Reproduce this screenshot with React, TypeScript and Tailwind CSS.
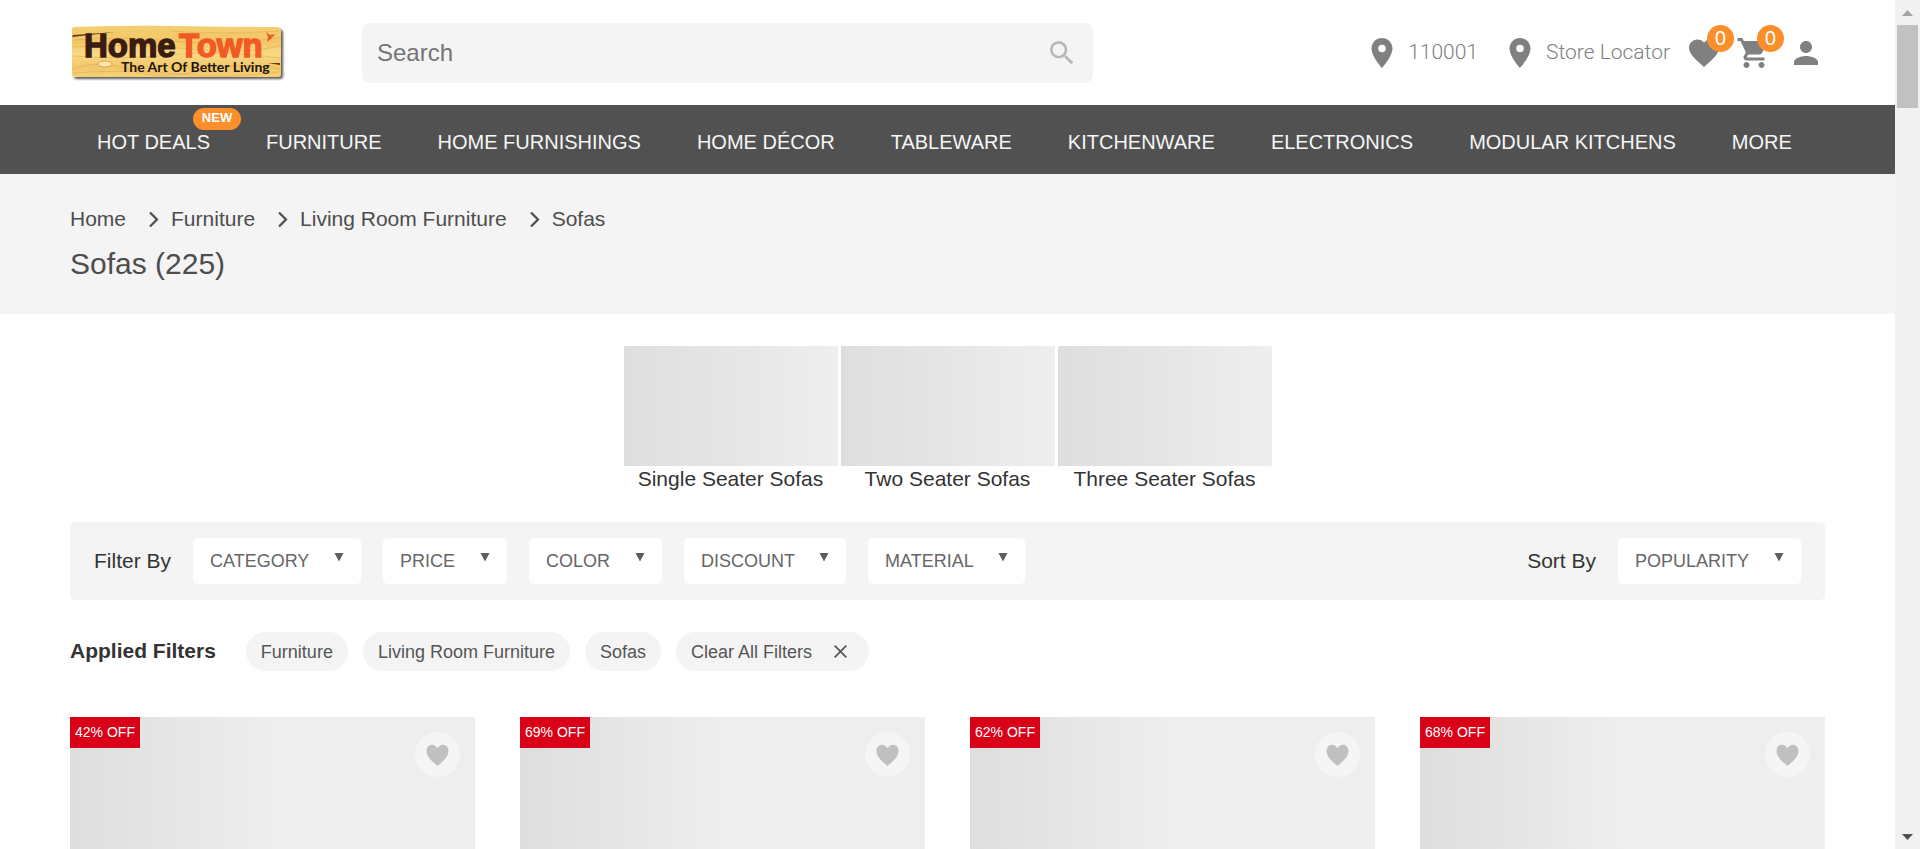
import React from "react";
import {
  MdFavorite,
  MdLocationOn,
  MdPerson,
  MdSearch,
  MdShoppingCart,
} from "react-icons/md";

const navItems = [
  "FURNITURE",
  "HOME FURNISHINGS",
  "HOME DÉCOR",
  "TABLEWARE",
  "KITCHENWARE",
  "ELECTRONICS",
  "MODULAR KITCHENS",
  "MORE",
];
const crumbs = ["Home", "Furniture", "Living Room Furniture", "Sofas"];
const categories = ["Single Seater Sofas", "Two Seater Sofas", "Three Seater Sofas"];
const filters = ["CATEGORY", "PRICE", "COLOR", "DISCOUNT", "MATERIAL"];
const applied = ["Furniture", "Living Room Furniture", "Sofas"];
const discounts = ["42% OFF", "69% OFF", "62% OFF", "68% OFF"];

function Logo() {
  return (
    <svg width="216" height="60" viewBox="0 0 216 60" role="img" aria-label="HomeTown, The Art Of Better Living">
      <defs>
        <linearGradient id="wood" x1="0" y1="0" x2="0" y2="1">
          <stop offset="0" stopColor="#f3cf73" />
          <stop offset="0.3" stopColor="#f3c665" />
          <stop offset="0.55" stopColor="#f9d985" />
          <stop offset="0.8" stopColor="#f2c76b" />
          <stop offset="1" stopColor="#f5d077" />
        </linearGradient>
        <filter id="shade" x="-5%" y="-10%" width="112%" height="130%">
          <feDropShadow dx="2" dy="2" stdDeviation="1" floodColor="#222" floodOpacity="0.75" />
        </filter>
      </defs>
      <path d="M4 4 Q60 2 110 3 T208 4 Q211 5 211 8 V51 Q211 54 208 54 H5 Q2 54 2 51 V7 Q2 4 4 4Z" fill="url(#wood)" filter="url(#shade)" />
      <g fill="none" stroke="#d99c3c" strokeWidth="0.8" opacity="0.5">
        <path d="M4 17 Q50 13 100 18 T209 15" />
        <path d="M3 24 Q70 20 120 26 T210 23" />
        <path d="M3 33 Q50 37 100 32 T210 35" />
        <path d="M3 46 Q30 36 60 47 T130 48 T210 46" />
        <path d="M3 50 Q60 46 110 51 T209 49" />
        <path d="M100 8 Q150 12 209 8" />
      </g>
      <ellipse cx="35" cy="41" rx="7" ry="3" fill="#fbe7ae" stroke="#cf8f3c" strokeWidth="0.7" />
      <path d="M3 12 L46 9 L20 12 L2 14Z M198 40 L210 40 L210 42Z" fill="#5b3a16" />
      <g fontFamily="'Liberation Sans', sans-serif" fontWeight="700" fontSize="33" strokeWidth="1.4">
        <text x="14" y="34" fill="#3a1c12" stroke="#3a1c12">Home</text>
        <text x="109" y="34" fill="#f15a24" stroke="#f15a24">Town</text>
      </g>
      <path d="M196 9 L200 12 L205 11 L202 15 L197 19 L198 14Z" fill="#f15a24" />
      <text x="51" y="49" fontFamily="Lato, sans-serif" fontWeight="700" fontSize="14" fill="#20140c">The Art Of Better Living</text>
    </svg>
  );
}

function CountBadge({ count }: { count: number }) {
  return (
    <span className="absolute -top-2.5 left-[21px] flex size-[27px] items-center justify-center rounded-full bg-[#fa8f2c] font-['Noto_Sans',sans-serif] text-xl leading-none text-white">
      {count}
    </span>
  );
}

function Header() {
  return (
    <header className="flex h-[105px] items-center pl-[70px] pr-[71px] text-[#808080]">
      <a href="#home" className="block">
        <Logo />
      </a>
      <form className="ml-[76px] flex h-[60px] w-[731px] items-center rounded-lg bg-[#f4f4f4] px-[15px]">
        <input
          type="text"
          aria-label="Search"
          placeholder="Search"
          className="min-w-0 flex-1 bg-transparent text-2xl outline-none placeholder:text-[#757575]"
        />
        <button type="button" aria-label="Submit search">
          <MdSearch className="size-8 text-[#b8b8b8]" />
        </button>
      </form>
      <div className="ml-auto flex items-center">
        <div className="flex items-center gap-6 font-['Roboto',sans-serif] text-[21px] font-light">
          <button type="button" className="flex items-center gap-2">
            <MdLocationOn className="size-9" />
            110001
          </button>
          <a href="#stores" className="flex items-center gap-2">
            <MdLocationOn className="size-9" />
            Store Locator
          </a>
        </div>
        <a href="#wishlist" aria-label="Wishlist" className="relative ml-4">
          <MdFavorite className="size-9" />
          <CountBadge count={0} />
        </a>
        <a href="#cart" aria-label="Cart" className="relative ml-3.5">
          <MdShoppingCart className="size-9" />
          <CountBadge count={0} />
        </a>
        <a href="#account" aria-label="Account" className="ml-4">
          <MdPerson className="size-9" />
        </a>
      </div>
    </header>
  );
}

function MainNav() {
  return (
    <nav className="flex h-[69px] items-center gap-14 bg-[#515151] px-[97px] pt-1 text-xl text-[#f6f6f6]">
      <a href="#deals" className="relative whitespace-nowrap">
        HOT DEALS
        <span className="absolute -top-5 left-24 flex h-[22px] w-12 items-center justify-center rounded-full bg-[#fa8f2c] text-[13px] font-bold text-white">
          NEW
        </span>
      </a>
      {navItems.map((item) => (
        <a key={item} href="#nav" className="whitespace-nowrap">
          {item}
        </a>
      ))}
    </nav>
  );
}

function Chevron() {
  return (
    <svg width="10" height="17" viewBox="0 0 10 17" fill="none" stroke="currentColor" strokeWidth="2.2" aria-hidden="true">
      <path d="M1 1.5 L8 8.5 L1 15.5" />
    </svg>
  );
}

function PageTitle() {
  return (
    <div className="h-[140px] bg-[#f4f4f4] px-[70px] pt-[30px] text-[#4d4d4d]">
      <ol className="flex items-center text-[21px] leading-[30px]">
        {crumbs.map((crumb, i) => (
          <li key={crumb} className="flex items-center">
            {i > 0 && (
              <span className="ml-[23px] mr-3">
                <Chevron />
              </span>
            )}
            <a href="#crumb">{crumb}</a>
          </li>
        ))}
      </ol>
      <h1 className="mt-2.5 text-[30px] leading-10">Sofas (225)</h1>
    </div>
  );
}

function Dropdown({ id, label, value }: { id: string; label: string; value: string }) {
  return (
    <div className="relative">
      <select
        id={id}
        aria-label={label}
        className="block h-[46px] appearance-none rounded-[5px] bg-white pl-[17px] pr-[51px] text-lg text-[#666]"
      >
        <option>{value}</option>
      </select>
      <svg width="10" height="9" viewBox="0 0 10 9" className="pointer-events-none absolute right-[17px] top-[15px]" aria-hidden="true">
        <path d="M0.5 0 H9.5 L5 8.5Z" fill="#5e5e5e" />
      </svg>
    </div>
  );
}

function FilterBar() {
  return (
    <div className="mt-[31px] flex h-[78px] items-center gap-[22px] rounded-[5px] bg-[#f4f4f4] px-6 text-[21px] text-[#333]">
      <span>Filter By</span>
      {filters.map((name) => (
        <Dropdown key={name} id={name} label={name} value={name} />
      ))}
      <label htmlFor="sort" className="ml-auto">
        Sort By
      </label>
      <Dropdown id="sort" label="Sort By" value="POPULARITY" />
    </div>
  );
}

function AppliedFilters() {
  return (
    <div className="mt-8 flex items-center gap-[15px] text-lg text-[#555]">
      <h2 className="mr-[15px] text-[21px] font-bold text-[#333]">Applied Filters</h2>
      {applied.map((name) => (
        <button key={name} type="button" className="h-[39px] rounded-full bg-[#f4f4f4] px-[15px]">
          {name}
        </button>
      ))}
      <button type="button" className="flex h-[39px] items-center gap-[22px] rounded-full bg-[#f4f4f4] pl-[15px] pr-[22px]">
        Clear All Filters
        <svg width="13" height="13" viewBox="0 0 13 13" stroke="currentColor" strokeWidth="1.7" aria-hidden="true">
          <path d="M0.7 0.7 L12.3 12.3 M12.3 0.7 L0.7 12.3" />
        </svg>
      </button>
    </div>
  );
}

function ProductCard({ discount }: { discount: string }) {
  return (
    <article className="relative h-[405px] bg-linear-to-r from-[#dedede] to-[#eee] to-50%">
      <span className="absolute left-0 top-0 flex h-[31px] w-[70px] items-center justify-center whitespace-nowrap bg-[#da0018] text-[14px] text-white">
        {discount}
      </span>
      <button
        type="button"
        aria-label="Add to wishlist"
        className="absolute right-[15px] top-[15px] flex size-[45px] items-center justify-center rounded-full bg-[#f5f5f5]"
      >
        <svg width="23" height="22" viewBox="0 0 23 22" fill="#c0c0c0" aria-hidden="true">
          <path d="M11.5 22 C9 19.5 0.5 14 0.5 7 C0.5 3 3 0.7 6 0.7 C9 0.7 10.5 2.5 11.5 4.3 C12.5 2.5 14 0.7 17 0.7 C20 0.7 22.5 3 22.5 7 C22.5 14 14 19.5 11.5 22Z" />
        </svg>
      </button>
    </article>
  );
}

function Scrollbar() {
  return (
    <div className="flex w-[25px] shrink-0 flex-col items-center bg-[#f1f1f1]" aria-hidden="true">
      <div className="flex h-[25px] items-center">
        <svg width="11" height="6" viewBox="0 0 11 6">
          <path d="M0 6 L5.5 0 L11 6Z" fill="#a3a3a3" />
        </svg>
      </div>
      <div className="h-[83px] w-[21px] bg-[#c1c1c1]" />
      <div className="mt-auto flex h-[25px] items-center">
        <svg width="11" height="6" viewBox="0 0 11 6">
          <path d="M0 0 H11 L5.5 6Z" fill="#505050" />
        </svg>
      </div>
    </div>
  );
}

export default function App() {
  return (
    <div className="flex h-screen overflow-hidden bg-white font-['Liberation_Sans',Arial,sans-serif]">
      <div className="min-w-0 flex-1 overflow-hidden">
        <Header />
        <MainNav />
        <PageTitle />
        <main className="px-[70px] pt-8">
          <ul className="flex justify-center gap-[3px] text-center text-[21px] leading-[25px] text-[#333]">
            {categories.map((name) => (
              <li key={name} className="w-[214px]">
                <a href="#category">
                  <div className="h-[120px] bg-linear-to-r from-[#dedede] to-[#eee]" />
                  {name}
                </a>
              </li>
            ))}
          </ul>
          <FilterBar />
          <AppliedFilters />
          <section className="mt-[46px] grid grid-cols-4 gap-[45px]">
            {discounts.map((discount) => (
              <ProductCard key={discount} discount={discount} />
            ))}
          </section>
        </main>
      </div>
      <Scrollbar />
    </div>
  );
}
